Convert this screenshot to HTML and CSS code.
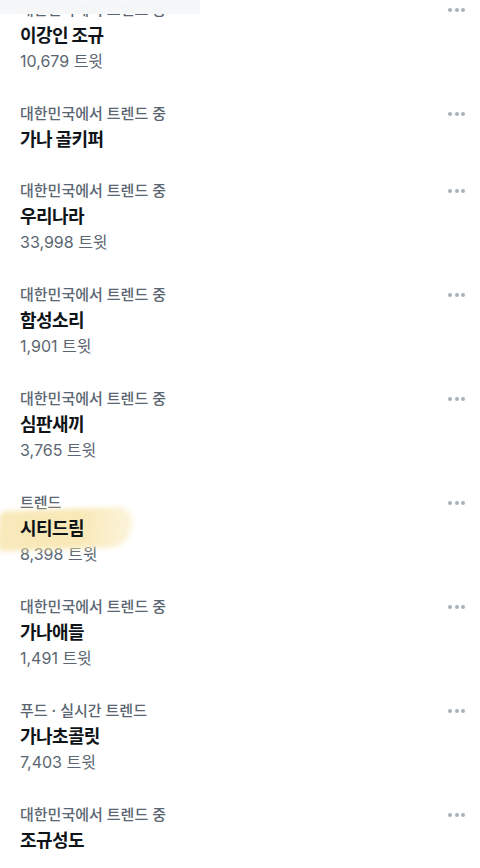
FILE: index.html
```html
<!DOCTYPE html>
<html lang="ko">

<head>
    <meta charset="UTF-8" />
    <meta name="viewport" content="width=device-width, initial-scale=1.0" />
    <title>트렌드</title>
    <link rel="stylesheet" href="styles.css">
</head>

<body>
    <div class="top-fade"></div>

    <ul class="trend-list">
        <li class="trend">
            <div class="trend-body">
                <p class="trend-meta">대한민국에서 트렌드 중</p>
                <p class="trend-name">이강인 조규</p>
                <p class="trend-count">10,679 트윗</p>
            </div>
            <span class="more"><i></i><i></i><i></i></span>
        </li>
        <li class="trend">
            <div class="trend-body">
                <p class="trend-meta">대한민국에서 트렌드 중</p>
                <p class="trend-name">가나 골키퍼</p>
            </div>
            <span class="more"><i></i><i></i><i></i></span>
        </li>
        <li class="trend">
            <div class="trend-body">
                <p class="trend-meta">대한민국에서 트렌드 중</p>
                <p class="trend-name">우리나라</p>
                <p class="trend-count">33,998 트윗</p>
            </div>
            <span class="more"><i></i><i></i><i></i></span>
        </li>
        <li class="trend">
            <div class="trend-body">
                <p class="trend-meta">대한민국에서 트렌드 중</p>
                <p class="trend-name">함성소리</p>
                <p class="trend-count">1,901 트윗</p>
            </div>
            <span class="more"><i></i><i></i><i></i></span>
        </li>
        <li class="trend">
            <div class="trend-body">
                <p class="trend-meta">대한민국에서 트렌드 중</p>
                <p class="trend-name">심판새끼</p>
                <p class="trend-count">3,765 트윗</p>
            </div>
            <span class="more"><i></i><i></i><i></i></span>
        </li>
        <li class="trend">
            <div class="trend-body">
                <p class="trend-meta">트렌드</p>
                <p class="trend-name"><span class="marker"></span><span class="name-text">시티드림</span></p>
                <p class="trend-count">8,398 트윗</p>
            </div>
            <span class="more"><i></i><i></i><i></i></span>
        </li>
        <li class="trend">
            <div class="trend-body">
                <p class="trend-meta">대한민국에서 트렌드 중</p>
                <p class="trend-name">가나애들</p>
                <p class="trend-count">1,491 트윗</p>
            </div>
            <span class="more"><i></i><i></i><i></i></span>
        </li>
        <li class="trend">
            <div class="trend-body">
                <p class="trend-meta">푸드 · 실시간 트렌드</p>
                <p class="trend-name">가나초콜릿</p>
                <p class="trend-count">7,403 트윗</p>
            </div>
            <span class="more"><i></i><i></i><i></i></span>
        </li>
        <li class="trend">
            <div class="trend-body">
                <p class="trend-meta">대한민국에서 트렌드 중</p>
                <p class="trend-name">조규성도</p>
            </div>
            <span class="more"><i></i><i></i><i></i></span>
        </li>
    </ul>
</body>

</html>
```

FILE: styles.css
```css
* {
    box-sizing: border-box;
    margin: 0;
    padding: 0;
}

html,
body {
    width: 100%;
    height: 100%;
    background-color: #ffffff;
    overflow: hidden;
}

body {
    font-family: 'Inter', 'Noto Sans CJK KR', sans-serif;
    color: #0f1419;
}

/* frosted strip left over from the screenshot's header */
.top-fade {
    position: fixed;
    top: 0;
    left: 0;
    width: 200px;
    height: 14px;
    background-color: rgba(246, 247, 248, 0.985);
    z-index: 2;
}

.trend-list {
    list-style: none;
    margin-top: -14px;
}

.trend {
    display: flex;
    align-items: flex-start;
    padding: 14px 15px 15px 20px;
}

.trend-body {
    flex: 1;
}

.trend-meta {
    font-size: 15px;
    line-height: 20px;
    font-weight: 500;
    color: #5a6672;
}

.trend-name {
    position: relative;
    margin-top: 4px;
    font-size: 18px;
    line-height: 24px;
    font-weight: 700;
    letter-spacing: -0.6px;
    color: #0f1419;
}

.name-text {
    position: relative;
}

.marker {
    position: absolute;
    left: -22px;
    top: -8px;
    width: 134px;
    height: 40px;
    background: linear-gradient(90deg, rgba(246, 224, 158, 0.7) 0%, rgba(247, 227, 165, 0.8) 60%, rgba(250, 234, 185, 0.5) 100%);
    border-radius: 6px 16px 20px 8px;
    transform: rotate(-2deg) skewX(-6deg);
    filter: blur(2.5px);
}

.trend-count {
    font-size: 16px;
    line-height: 27px;
    color: #5a6672;
}

.more {
    display: flex;
    gap: 2.5px;
    align-items: center;
    height: 20px;
}

.more i {
    display: block;
    width: 4px;
    height: 4px;
    border-radius: 50%;
    background-color: #a7b1ba;
}
```
